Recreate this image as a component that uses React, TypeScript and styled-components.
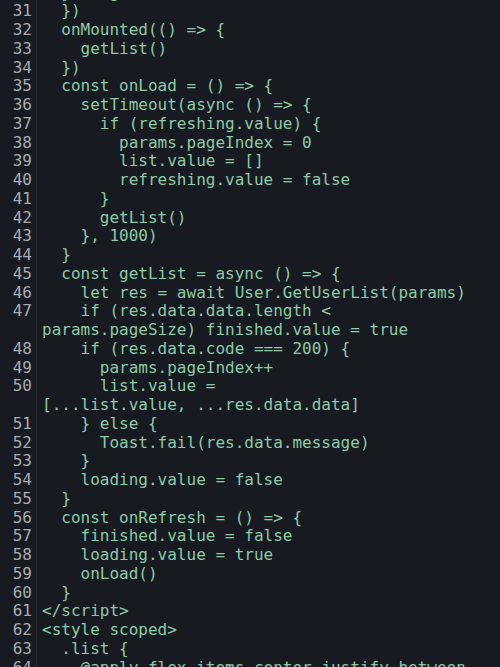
import React from "react";
import styled, { createGlobalStyle } from "styled-components";

const Global = createGlobalStyle`
  html, body {
    margin: 0;
    padding: 0;
    background: #171a21;
    overflow: hidden;
  }
`;

const Editor = styled.div`
  width: 500px;
  height: 667px;
  overflow: hidden;
  background: #171a21;
  font-family: "DejaVu Sans Mono", "Liberation Mono", monospace;
  font-size: 16px;
  line-height: 18.75px;
`;

const Scroller = styled.div`
  display: flex;
  flex-direction: column;
  margin-top: -16.3px;
`;

const Line = styled.div`
  display: grid;
  grid-template-columns: 37px 1fr;
`;

const Num = styled.div`
  color: #a7abb1;
  text-align: right;
  padding-right: 4px;
  border-right: 1px solid #262a32;
  box-sizing: border-box;
`;

const Code = styled.div`
  padding-left: 5px;
  color: #8dcaa6;
  white-space: pre;
`;

const Row = styled.div`
  height: 18.75px;
`;

const lines: (string | string[])[] = [
  "  }, 0 getList",
  "  })",
  "  onMounted(() => {",
  "    getList()",
  "  })",
  "  const onLoad = () => {",
  "    setTimeout(async () => {",
  "      if (refreshing.value) {",
  "        params.pageIndex = 0",
  "        list.value = []",
  "        refreshing.value = false",
  "      }",
  "      getList()",
  "    }, 1000)",
  "  }",
  "  const getList = async () => {",
  "    let res = await User.GetUserList(params)",
  ["    if (res.data.data.length <", "params.pageSize) finished.value = true"],
  "    if (res.data.code === 200) {",
  "      params.pageIndex++",
  ["      list.value =", "[...list.value, ...res.data.data]"],
  "    } else {",
  "      Toast.fail(res.data.message)",
  "    }",
  "    loading.value = false",
  "  }",
  "  const onRefresh = () => {",
  "    finished.value = false",
  "    loading.value = true",
  "    onLoad()",
  "  }",
  "</script>",
  "<style scoped>",
  "  .list {",
  "    @apply flex items-center justify-between",
  "  }",
];

export default function App() {
  return (
    <>
      <Global />
      <Editor>
        <Scroller>
          {lines.map((l, i) => {
            const rows = Array.isArray(l) ? l : [l];
            return (
              <Line key={i}>
                <Num>{30 + i}</Num>
                <Code>
                  {rows.map((r, j) => (
                    <Row key={j}>{r}</Row>
                  ))}
                </Code>
              </Line>
            );
          })}
        </Scroller>
      </Editor>
    </>
  );
}
